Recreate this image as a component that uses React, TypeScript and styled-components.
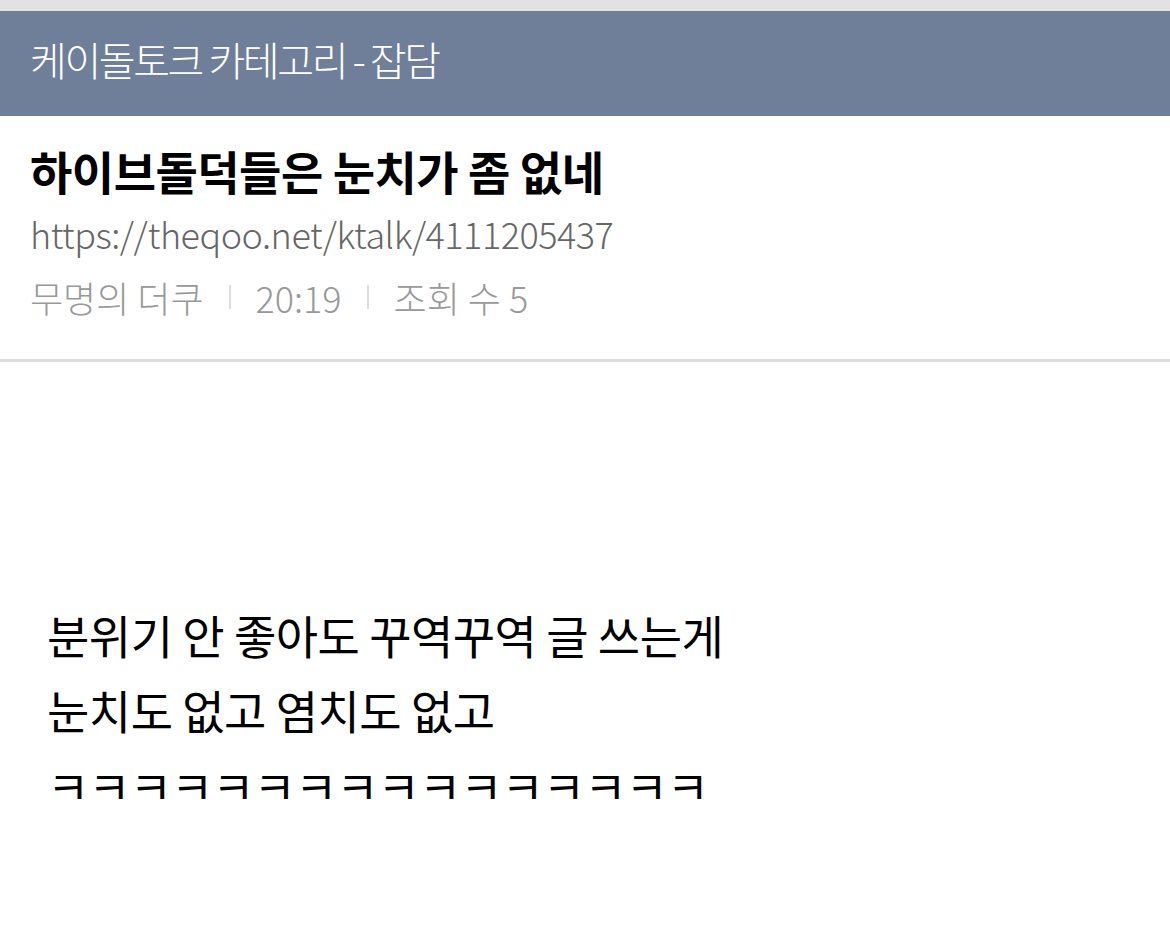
import React from 'react'
import styled, { createGlobalStyle } from 'styled-components'

const GlobalStyle = createGlobalStyle`
  html, body {
    margin: 0;
    padding: 0;
    background: #ffffff;
  }
  body {
    font-family: 'Noto Sans CJK KR', 'Noto Sans', sans-serif;
  }
`

const Page = styled.div`
  width: 1170px;
  min-height: 938px;
  background: #ffffff;
  border-top: 11px solid #e2e2e2;
  box-sizing: border-box;
`

const CategoryBar = styled.div`
  height: 105px;
  display: flex;
  align-items: center;
  padding: 0 30px 10px;
  box-sizing: border-box;
  background: #6f7f99;
  color: #ffffff;
  font-size: 40px;
  font-weight: 300;
  letter-spacing: -2.4px;
`

const Header = styled.div`
  padding: 22px 30px 30px;
  border-bottom: 3px solid #dddddd;
`

const Title = styled.h1`
  margin: 0;
  font-size: 46px;
  font-weight: 700;
  line-height: 64px;
  color: #000000;
  letter-spacing: -0.5px;
`

const Url = styled.div`
  font-size: 36px;
  font-weight: 300;
  line-height: 63px;
  color: #666666;
  letter-spacing: -0.5px;
`

const Meta = styled.div`
  display: flex;
  align-items: center;
  font-size: 36px;
  font-weight: 300;
  line-height: 64px;
  color: #999999;
`

const Divider = styled.span`
  width: 2px;
  height: 24px;
  margin: 0 25px;
  background: #dddddd;
`

const Body = styled.div`
  padding: 235px 0 0 47px;
`

const Line = styled.p<{ $tight?: boolean }>`
  margin: 0;
  font-size: 46px;
  font-weight: 400;
  line-height: 75px;
  color: #000000;
  letter-spacing: ${({ $tight }) => ($tight ? '-1px' : '-0.5px')};
`

const App: React.FC = () => {
  return (
    <>
      <GlobalStyle />
      <Page>
        <CategoryBar>케이돌토크 카테고리 - 잡담</CategoryBar>
        <Header>
          <Title>하이브돌덕들은 눈치가 좀 없네</Title>
          <Url>https://theqoo.net/ktalk/4111205437</Url>
          <Meta>
            무명의 더쿠
            <Divider />
            20:19
            <Divider />
            조회 수 5
          </Meta>
        </Header>
        <Body>
          <Line>분위기 안 좋아도 꾸역꾸역 글 쓰는게</Line>
          <Line>눈치도 없고 염치도 없고</Line>
          <Line $tight>ㅋㅋㅋㅋㅋㅋㅋㅋㅋㅋㅋㅋㅋㅋㅋㅋ</Line>
        </Body>
      </Page>
    </>
  )
}

export default App
